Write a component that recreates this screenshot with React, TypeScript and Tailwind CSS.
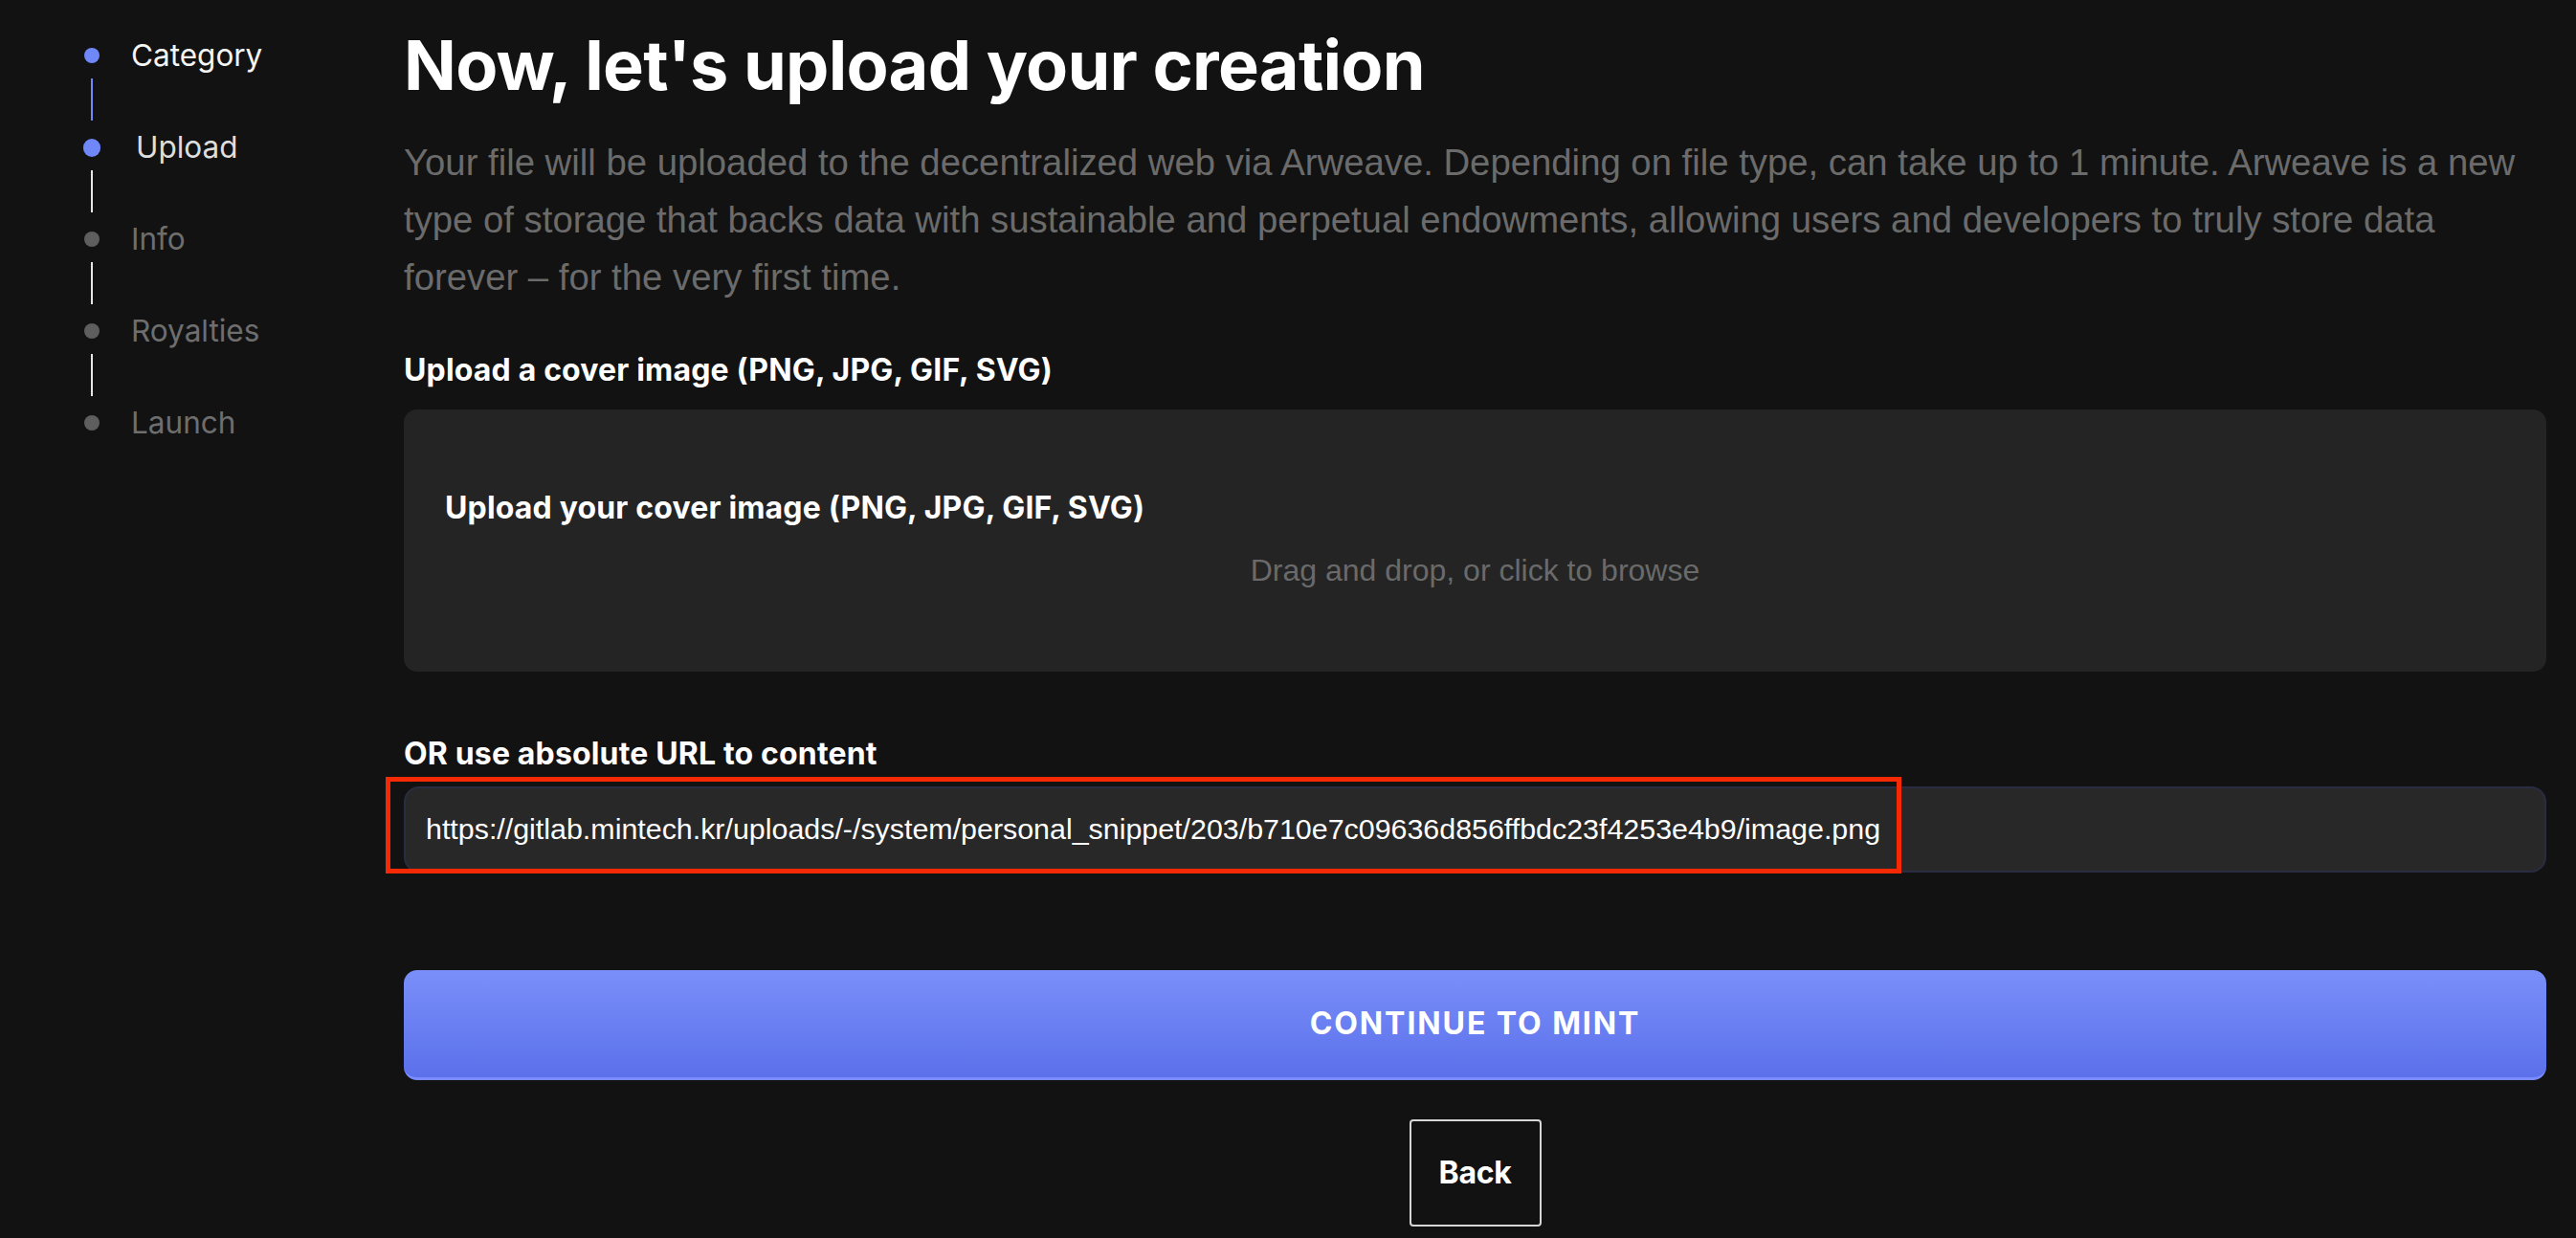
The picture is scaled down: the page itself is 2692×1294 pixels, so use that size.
import React from "react";

const steps = [
  { label: "Category", state: "done" },
  { label: "Upload", state: "active" },
  { label: "Info", state: "todo" },
  { label: "Royalties", state: "todo" },
  { label: "Launch", state: "todo" },
];

export default function App() {
  return (
    <div className="flex h-[1294px] w-full overflow-hidden bg-[#121212] font-['Inter',sans-serif]">
      <aside className="w-[422px] shrink-0 pt-[32px] pl-[87px]">
        {steps.map((s, i) => (
          <div key={s.label}>
            <div className="flex h-[52px] items-center">
              <div className="flex w-[18px] justify-center">
                <span
                  className={
                    s.state === "active"
                      ? "h-[19px] w-[19px] rounded-full bg-[#7087f7]"
                      : s.state === "done"
                      ? "h-[16px] w-[16px] rounded-full bg-[#7087f7]"
                      : "h-[16px] w-[16px] rounded-full bg-[#5e5e5e]"
                  }
                />
              </div>
              <span
                className={
                  s.state === "active"
                    ? "ml-[37px] text-[31.5px] text-[#dedede]"
                    : s.state === "done"
                    ? "ml-[32px] text-[31.5px] text-[#f5f5f5]"
                    : "ml-[32px] text-[31.5px] text-[#6e6e6e]"
                }
              >
                {s.label}
              </span>
            </div>
            {i < steps.length - 1 && (
              <div className="-mt-[2px] mb-[2px] flex h-[44px] w-[18px] justify-center">
                <span className={i === 0 ? "h-full w-[2px] bg-[#7087f7]" : "h-full w-[2px] bg-[#e6e6e6]"} />
              </div>
            )}
          </div>
        ))}
      </aside>

      <main className="flex min-w-0 flex-1 flex-col pr-[31px]">
        <h1 className="mt-[32px] text-[72px] font-bold leading-[72px] tracking-[-0.01em] text-white">
          Now, let's upload your creation
        </h1>
        <p className="mt-[36px] font-['Liberation_Sans',Arial,sans-serif] text-[38.3px] leading-[60px] text-[#6b6b6b]">
          Your file will be uploaded to the decentralized web via Arweave. Depending on file type, can take up to 1
          minute. Arweave is a new type of storage that backs data with sustainable and perpetual endowments, allowing
          users and developers to truly store data forever – for the very first time.
        </p>

        <div className="mt-[49px] text-[32px] font-bold leading-[36px] tracking-[0.005em] text-white">
          Upload a cover image (PNG, JPG, GIF, SVG)
        </div>
        <div className="mt-[23px] flex h-[274px] flex-col rounded-[14px] bg-[#242424] px-[43px] pt-[85px]">
          <div className="text-[32px] font-bold leading-[36px] tracking-[0.005em] text-white">
            Upload your cover image (PNG, JPG, GIF, SVG)
          </div>
          <div className="mt-[27px] text-center font-['Liberation_Sans',Arial,sans-serif] text-[32px] leading-[40px] text-[#6a6a6a]">
            Drag and drop, or click to browse
          </div>
        </div>

        <div className="mt-[68px] text-[32px] font-bold leading-[36px] tracking-[0.005em] text-white">
          OR use absolute URL to content
        </div>
        <div className="relative mt-[16px]">
          <div className="flex h-[90px] items-center rounded-[16px] border-2 border-[#2a2d42] bg-[#282828] px-[21px]">
            <span className="whitespace-nowrap font-['Liberation_Sans',Arial,sans-serif] text-[30.4px] text-white">
              https://gitlab.mintech.kr/uploads/-/system/personal_snippet/203/b710e7c09636d856ffbdc23f4253e4b9/image.png
            </span>
          </div>
          <div className="pointer-events-none absolute -left-[19px] -top-[10px] h-[101px] w-[1584px] border-[5px] border-[#f52a05]" />
        </div>

        <button className="mt-[102px] flex h-[115px] w-full items-center justify-center rounded-[14px] border-b-[3px] border-[#7b8cff] bg-gradient-to-b from-[#7a8ff9] to-[#5b70ea] text-[32px] font-bold uppercase tracking-[0.06em] text-white">
          Continue to Mint
        </button>

        <div className="mt-[41px] flex justify-center">
          <button className="flex h-[112px] w-[138px] items-center justify-center rounded-[4px] border-2 border-[#d6d6d6] bg-[#121212] text-[32px] font-bold tracking-[-0.01em] text-white">
            Back
          </button>
        </div>
      </main>
    </div>
  );
}
